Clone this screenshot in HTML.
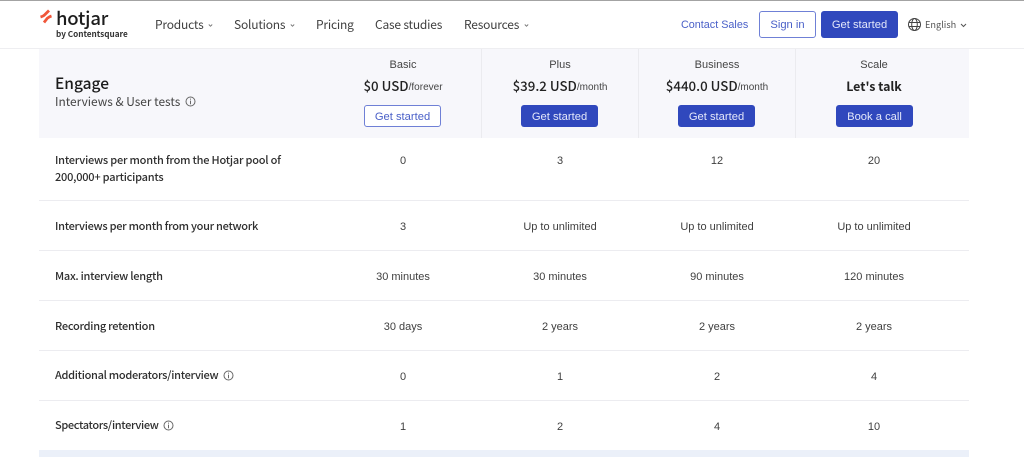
<!DOCTYPE html>
<html><head><meta charset="utf-8"><style>
html,body{margin:0;padding:0;width:1024px;height:457px;overflow:hidden;background:#fff}
body{position:relative;font-family:"Liberation Sans",sans-serif;color:#3a3a3a}
.a{position:absolute;white-space:nowrap}
.c{position:absolute;white-space:nowrap;transform:translateX(-50%);text-align:center}
.n{font-family:"Noto Sans CJK JP","Liberation Sans",sans-serif}
.v{font-size:11px;line-height:14px;color:#3f3f3f}
.l{left:55px;font-size:11px;letter-spacing:-.22px;line-height:17px;font-weight:500;color:#2f2f2f;font-family:"Noto Sans CJK JP","Liberation Sans",sans-serif}
.hr{position:absolute;left:39px;width:930px;height:1px;background:#ececf0}
.b{position:absolute;box-sizing:border-box;border-radius:3px;font-size:11.2px;text-align:center;background:#3048bd;color:#e4e8fa}
.o{background:#fff;border:1px solid #6f80d6;color:#4a60c8}
.p{font-size:13.3px;line-height:18px;color:#222;font-weight:500;font-family:"Noto Sans CJK JP","Liberation Sans",sans-serif}
.p small{font-family:"Liberation Sans",sans-serif;font-size:10px;font-weight:400;color:#444;position:relative;top:-1px}
.nav{top:16px;font-size:12px;letter-spacing:-.2px;line-height:17px;color:#3f3f3f;font-family:"Noto Sans CJK JP","Liberation Sans",sans-serif}
</style></head><body>
<div class="a" style="left:0;top:0;width:1024px;height:1px;background:#a3a3a3"></div>
<div class="a" style="left:0;top:48px;width:1024px;height:1px;background:#eeeef1"></div>

<svg class="a" style="left:39px;top:9px" width="14" height="15" viewBox="0 0 14 15"><path d="M10 1.5 L6 5.5 Q4.5 7.2 1.5 8 M12.5 7 Q9.8 7.8 8.3 9.3 L5 13.5" fill="none" stroke="#f0563a" stroke-width="2.8"/></svg>
<div class="a n" style="left:56px;top:5px;font-size:18.5px;line-height:26px;font-weight:500;color:#1d1d1d;letter-spacing:-.2px">hotjar</div>
<div class="a n" style="left:56px;top:27px;font-size:8.2px;line-height:14px;font-weight:700;color:#333">by Contentsquare</div>

<div class="a nav" style="left:155px">Products</div>
<svg class="a" style="left:208px;top:24px" width="5" height="3" viewBox="0 0 5 3"><path d="M.8.5L2.5 2.2L4.2.5" fill="none" stroke="#777" stroke-width=".9"/></svg>
<div class="a nav" style="left:234px">Solutions</div>
<svg class="a" style="left:290px;top:24px" width="5" height="3" viewBox="0 0 5 3"><path d="M.8.5L2.5 2.2L4.2.5" fill="none" stroke="#777" stroke-width=".9"/></svg>
<div class="a nav" style="left:316px">Pricing</div>
<div class="a nav" style="left:375px">Case studies</div>
<div class="a nav" style="left:464px">Resources</div>
<svg class="a" style="left:524px;top:24px" width="5" height="3" viewBox="0 0 5 3"><path d="M.8.5L2.5 2.2L4.2.5" fill="none" stroke="#777" stroke-width=".9"/></svg>

<div class="a" style="left:681px;top:18px;font-size:10.8px;line-height:15px;color:#4a60c8">Contact Sales</div>
<div class="b o" style="left:759px;top:11px;width:57px;height:27px;line-height:27px">Sign in</div>
<div class="b" style="left:821px;top:11px;width:77px;height:27px;line-height:29px">Get started</div>
<svg class="a" style="left:907px;top:17px" width="15" height="15" viewBox="0 0 15 15" fill="none" stroke="#444" stroke-width="1"><circle cx="7.5" cy="7.5" r="6"/><ellipse cx="7.5" cy="7.5" rx="2.8" ry="6"/><path d="M1.5 5.5H13.5M1.5 9.5H13.5"/></svg>
<div class="a n" style="left:925px;top:17px;font-size:9.2px;line-height:15px;color:#555">English</div>
<svg class="a" style="left:960px;top:23px" width="7" height="5" viewBox="0 0 7 5"><path d="M1 1L3.5 3.5L6 1" fill="none" stroke="#555"/></svg>

<div class="a" style="left:39px;top:49px;width:930px;height:89px;background:#f7f7fb"></div>
<div class="a" style="left:481px;top:49px;width:1px;height:89px;background:#ebebef"></div>
<div class="a" style="left:638px;top:49px;width:1px;height:89px;background:#ebebef"></div>
<div class="a" style="left:795px;top:49px;width:1px;height:89px;background:#ebebef"></div>

<div class="a n" style="left:55px;top:73px;font-size:15.5px;line-height:21px;font-weight:500;color:#1c1c1c">Engage</div>
<div class="a n" style="left:55px;top:93px;font-size:11.9px;line-height:17px;color:#444">Interviews &amp; User tests</div>
<svg class="a" style="left:185px;top:96px" width="11" height="11" viewBox="0 0 11 11" fill="none" stroke="#666"><circle cx="5.5" cy="5.5" r="4.5"/><path d="M5.5 4.6V8.2M5.5 2.6V3.6"/></svg>

<div class="c v" style="left:403px;top:58px;color:#444">Basic</div>
<div class="c v" style="left:560px;top:58px;color:#444">Plus</div>
<div class="c v" style="left:717px;top:58px;color:#444">Business</div>
<div class="c v" style="left:874px;top:58px;color:#444">Scale</div>

<div class="c p" style="left:403px;top:77px">$0 USD<small>/forever</small></div>
<div class="c p" style="left:560px;top:77px">$39.2 USD<small>/month</small></div>
<div class="c p" style="left:717px;top:77px">$440.0 USD<small>/month</small></div>
<div class="c p" style="left:874px;top:77px;font-size:12.4px;font-weight:700">Let's talk</div>

<div class="b o" style="left:364px;top:105px;width:77px;height:22px;line-height:22px">Get started</div>
<div class="b" style="left:521px;top:105px;width:77px;height:22px;line-height:24px">Get started</div>
<div class="b" style="left:678px;top:105px;width:77px;height:22px;line-height:24px">Get started</div>
<div class="b" style="left:836px;top:105px;width:77px;height:22px;line-height:24px">Book a call</div>

<div class="a l" style="top:152px">Interviews per month from the Hotjar pool of<br>200,000+ participants</div>
<div class="c v" style="left:403px;top:154px">0</div><div class="c v" style="left:560px;top:154px">3</div><div class="c v" style="left:717px;top:154px">12</div><div class="c v" style="left:874px;top:154px">20</div>
<div class="hr" style="top:200px"></div>

<div class="a l" style="top:218px;letter-spacing:-.28px">Interviews per month from your network</div>
<div class="c v" style="left:403px;top:220px">3</div><div class="c v" style="left:560px;top:220px">Up to unlimited</div><div class="c v" style="left:717px;top:220px">Up to unlimited</div><div class="c v" style="left:874px;top:220px">Up to unlimited</div>
<div class="hr" style="top:250px"></div>

<div class="a l" style="top:268px;letter-spacing:-.25px">Max. interview length</div>
<div class="c v" style="left:403px;top:270px">30 minutes</div><div class="c v" style="left:560px;top:270px">30 minutes</div><div class="c v" style="left:717px;top:270px">90 minutes</div><div class="c v" style="left:874px;top:270px">120 minutes</div>
<div class="hr" style="top:300px"></div>

<div class="a l" style="top:318px;letter-spacing:-.25px">Recording retention</div>
<div class="c v" style="left:403px;top:320px">30 days</div><div class="c v" style="left:560px;top:320px">2 years</div><div class="c v" style="left:717px;top:320px">2 years</div><div class="c v" style="left:874px;top:320px">2 years</div>
<div class="hr" style="top:350px"></div>

<div class="a l" style="top:367px;letter-spacing:-.3px">Additional moderators/interview</div>
<svg class="a" style="left:223px;top:370px" width="11" height="11" viewBox="0 0 11 11" fill="none" stroke="#666"><circle cx="5.5" cy="5.5" r="4.5"/><path d="M5.5 4.6V8.2M5.5 2.6V3.6"/></svg>
<div class="c v" style="left:403px;top:370px">0</div><div class="c v" style="left:560px;top:370px">1</div><div class="c v" style="left:717px;top:370px">2</div><div class="c v" style="left:874px;top:370px">4</div>
<div class="hr" style="top:400px"></div>

<div class="a l" style="top:417px;letter-spacing:-.35px">Spectators/interview</div>
<svg class="a" style="left:163px;top:420px" width="11" height="11" viewBox="0 0 11 11" fill="none" stroke="#666"><circle cx="5.5" cy="5.5" r="4.5"/><path d="M5.5 4.6V8.2M5.5 2.6V3.6"/></svg>
<div class="c v" style="left:403px;top:420px">1</div><div class="c v" style="left:560px;top:420px">2</div><div class="c v" style="left:717px;top:420px">4</div><div class="c v" style="left:874px;top:420px">10</div>

<div class="a" style="left:39px;top:450px;width:930px;height:7px;background:#ebf0f9"></div>
</body></html>
